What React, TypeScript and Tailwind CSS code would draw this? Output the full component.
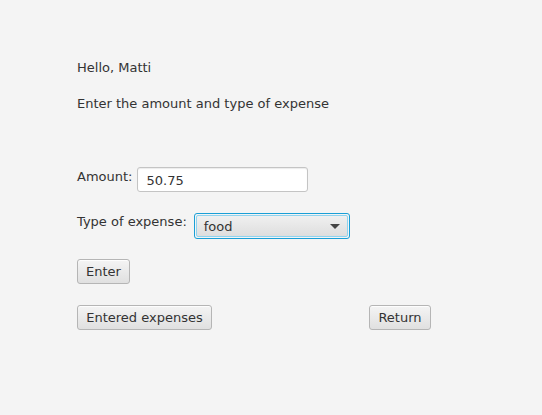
import React from 'react';

const btn =
  'h-[25px] rounded-[3px] border border-[#b5b5b5] bg-gradient-to-b from-[#f4f4f4] to-[#e0e0e0] shadow-[inset_0_1px_0_#fdfdfd] text-[13px] leading-[15px] text-[#333333] flex items-center justify-center';

const App: React.FC = () => {
  return (
    <div
      className="w-[542px] h-[415px] bg-[#f4f4f4] text-[#333333] text-[13px] leading-[15px] pt-[60px] pl-[77px] flex flex-col items-start"
      style={{ fontFamily: '"DejaVu Sans", sans-serif' }}
    >
      <div>Hello, Matti</div>
      <div className="mt-[21px]">Enter the amount and type of expense</div>

      <div className="mt-[56px] flex items-start gap-[5px]">
        <span className="mt-[2px]">Amount:</span>
        <div className="h-[25px] w-[171px] rounded-[3px] border border-[#c4c4c4] bg-white shadow-[inset_0_1px_1px_#ececec] pl-[8px] flex items-center pt-[1px]">
          50.75
        </div>
      </div>

      <div className="mt-[21px] flex items-start gap-[7px]">
        <span className="mt-[1px]">Type of expense:</span>
        <div className="h-[26px] w-[156px] rounded-[3px] border border-[#1a9fd6] p-[1px]">
          <div className="h-full w-full rounded-[2px] border border-[#8ed3ef] bg-gradient-to-b from-[#f0f0f0] to-[#dedede] flex items-center justify-between pl-[7px] pr-[7px] pt-[1px]">
            <span>food</span>
            <svg width="10" height="5" viewBox="0 0 10 5">
              <path d="M0 0 L10 0 L5 5 Z" fill="#444444" />
            </svg>
          </div>
        </div>
      </div>

      <button className={`${btn} mt-[20px] w-[53px]`}>Enter</button>

      <div className="mt-[21px] flex gap-[157px]">
        <button className={`${btn} w-[135px]`}>Entered expenses</button>
        <button className={`${btn} w-[62px]`}>Return</button>
      </div>
    </div>
  );
};

export default App;
